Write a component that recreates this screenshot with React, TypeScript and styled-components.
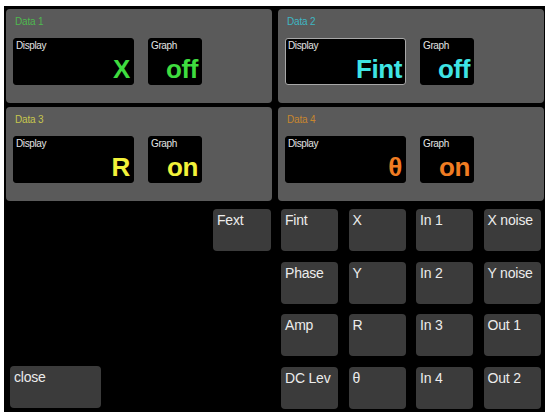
import React from "react";
import styled, { createGlobalStyle } from "styled-components";

const Global = createGlobalStyle`
  html, body { margin: 0; padding: 0; background: #ffffff; }
  body { padding: 6px 0 0 4px; overflow: hidden; }
  * { box-sizing: border-box; }
`;

const Screen = styled.div`
  width: 541px;
  height: 406px;
  background: #000;
  padding: 3px 1px 0 2px;
  font-family: "Liberation Sans", Arial, sans-serif;
  display: flex;
  flex-direction: column;
`;

const PanelGrid = styled.div`
  display: grid;
  grid-template-columns: 1fr 1fr;
  grid-template-rows: 94px 94px;
  column-gap: 6px;
  row-gap: 4px;
`;

const Panel = styled.div`
  background: #5a5a5a;
  border-radius: 4px;
  padding: 7px 6px 0 7px;
  display: flex;
  flex-direction: column;
`;

const PanelTitle = styled.div<{ $c: string }>`
  color: ${(p) => p.$c};
  font-size: 10px;
  line-height: 12px;
  height: 12px;
  padding-left: 2px;
  letter-spacing: -0.2px;
`;

const BoxRow = styled.div`
  display: flex;
  gap: 14px;
  margin-top: 10px;
`;

const Readout = styled.div<{ $w: number; $sel?: boolean }>`
  width: ${(p) => p.$w}px;
  height: 47px;
  background: #000;
  border-radius: 3px;
  border: 1px solid ${(p) => (p.$sel ? "#a8a8a8" : "#000")};
  display: flex;
  flex-direction: column;
  justify-content: space-between;
  padding: 1px 3px 2px 2px;
`;

const ReadoutLabel = styled.div`
  color: #e4e4e4;
  font-size: 10px;
  line-height: 12px;
  letter-spacing: -0.4px;
`;

const ReadoutValue = styled.div<{ $c: string }>`
  color: ${(p) => p.$c};
  font-size: 26px;
  font-weight: bold;
  line-height: 26px;
  text-align: right;
  letter-spacing: -0.4px;
`;

const Bottom = styled.div`
  display: flex;
  margin-top: 8px;
`;

const LeftPane = styled.div`
  width: 265px;
  height: 199px;
  display: flex;
  flex-direction: column;
  justify-content: space-between;
`;

const KeyGrid = styled.div`
  margin-left: 10px;
  display: grid;
  grid-template-columns: repeat(4, 57px);
  grid-auto-rows: 42px;
  column-gap: 10.5px;
  row-gap: 10.7px;
`;

const Key = styled.div<{ $w?: number; $self?: string; $ml?: number }>`
  width: ${(p) => (p.$w ? `${p.$w}px` : "auto")};
  height: 42px;
  align-self: ${(p) => p.$self || "stretch"};
  margin-left: ${(p) => p.$ml || 0}px;
  background: #3b3b3b;
  border-radius: 4px;
  color: #ececec;
  font-size: 14px;
  line-height: 16px;
  padding: 3px 4px;
  letter-spacing: -0.2px;
`;

type P = {
  title: string;
  tc: string;
  vc: string;
  value: string;
  graph: string;
  sel?: boolean;
};

const panels: P[] = [
  { title: "Data 1", tc: "#4fb84f", vc: "#3fdc3f", value: "X", graph: "off" },
  { title: "Data 2", tc: "#3fb6c2", vc: "#3fe4e4", value: "Fint", graph: "off", sel: true },
  { title: "Data 3", tc: "#c6c64e", vc: "#f2f23a", value: "R", graph: "on" },
  { title: "Data 4", tc: "#c8862e", vc: "#f07c22", value: "θ", graph: "on" },
];

const keys = [
  "Fint", "X", "In 1", "X noise",
  "Phase", "Y", "In 2", "Y noise",
  "Amp", "R", "In 3", "Out 1",
  "DC Lev", "θ", "In 4", "Out 2",
];

export default function App() {
  return (
    <>
      <Global />
      <Screen>
        <PanelGrid>
          {panels.map((p) => (
            <Panel key={p.title}>
              <PanelTitle $c={p.tc}>{p.title}</PanelTitle>
              <BoxRow>
                <Readout $w={121} $sel={p.sel}>
                  <ReadoutLabel>Display</ReadoutLabel>
                  <ReadoutValue $c={p.vc}>{p.value}</ReadoutValue>
                </Readout>
                <Readout $w={54}>
                  <ReadoutLabel>Graph</ReadoutLabel>
                  <ReadoutValue $c={p.vc}>{p.graph}</ReadoutValue>
                </Readout>
              </BoxRow>
            </Panel>
          ))}
        </PanelGrid>
        <Bottom>
          <LeftPane>
            <Key $w={58} $self="flex-end">Fext</Key>
            <Key $w={91} $self="flex-start" $ml={4}>close</Key>
          </LeftPane>
          <KeyGrid>
            {keys.map((k) => (
              <Key key={k}>{k}</Key>
            ))}
          </KeyGrid>
        </Bottom>
      </Screen>
    </>
  );
}
